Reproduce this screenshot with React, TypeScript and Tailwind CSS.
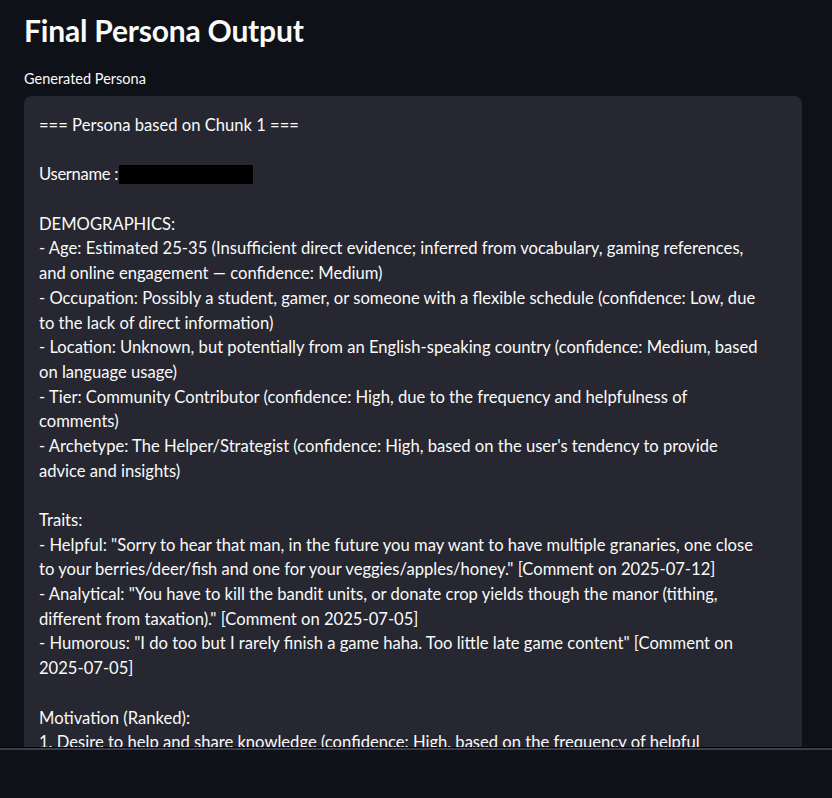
import React from "react";

const lines: string[] = [
  "=== Persona based on Chunk 1 ===",
  "",
  "__USERNAME__",
  "",
  "DEMOGRAPHICS:",
  "- Age: Estimated 25-35 (Insufficient direct evidence; inferred from vocabulary, gaming references,",
  "and online engagement — confidence: Medium)",
  "- Occupation: Possibly a student, gamer, or someone with a flexible schedule (confidence: Low, due",
  "to the lack of direct information)",
  "- Location: Unknown, but potentially from an English-speaking country (confidence: Medium, based",
  "on language usage)",
  "- Tier: Community Contributor (confidence: High, due to the frequency and helpfulness of",
  "comments)",
  "- Archetype: The Helper/Strategist (confidence: High, based on the user's tendency to provide",
  "advice and insights)",
  "",
  "Traits:",
  '- Helpful: "Sorry to hear that man, in the future you may want to have multiple granaries, one close',
  'to your berries/deer/fish and one for your veggies/apples/honey." [Comment on 2025-07-12]',
  '- Analytical: "You have to kill the bandit units, or donate crop yields though the manor (tithing,',
  'different from taxation)." [Comment on 2025-07-05]',
  '- Humorous: "I do too but I rarely finish a game haha. Too little late game content" [Comment on',
  "2025-07-05]",
  "",
  "Motivation (Ranked):",
  "1. Desire to help and share knowledge (confidence: High, based on the frequency of helpful",
];

const App = () => {
  return (
    <div
      className="w-full h-[798px] flex flex-col bg-[#0e1117] text-[#fafafa] overflow-hidden"
      style={{ fontFamily: "Lato, 'Liberation Sans', sans-serif" }}
    >
      <div className="h-[747px] overflow-hidden pl-6 pr-[30px] pt-[11px]">
        <h2 className="text-[30px] leading-[38px] font-bold tracking-[-0.2px]">
          Final Persona Output
        </h2>
        <div className="mt-[21px] text-[14.5px] leading-[18px]">
          Generated Persona
        </div>
        <div className="mt-[8px] bg-[#262730] rounded-lg pl-[15px] pr-4 pt-[17px] pb-4 text-[16.6px] leading-[24.7px]">
          {lines.map((line, i) =>
            line === "__USERNAME__" ? (
              <div key={i} className="flex items-center whitespace-nowrap h-[24.7px]">
                <span className="tracking-[-0.3px]">Username :</span>
                <span className="inline-block ml-px w-[134px] h-[19px] bg-black" />
              </div>
            ) : (
              <div key={i} className="whitespace-nowrap h-[24.7px]">
                {line || "\u00a0"}
              </div>
            )
          )}
        </div>
      </div>
      <div className="h-px bg-black" />
      <div className="h-[2px] bg-[#3b3e48]" />
      <div className="flex-1 bg-[#0e1117]" />
    </div>
  );
};

export default App;
